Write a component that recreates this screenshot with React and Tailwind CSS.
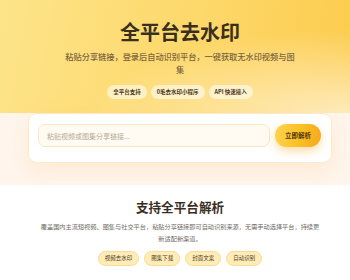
// App.jsx
import React from "react";

const topTags = ["全平台支持", "0毛去水印小程序", "API 快速接入"];
const featureTags = ["视频去水印", "图集下载", "封面文案", "自动识别"];

export default function App() {
  return (
    <div className="w-full min-h-[280px] bg-white font-['Noto_Sans_CJK_SC','Noto_Sans',sans-serif] overflow-hidden">
      {/* Hero */}
      <div className="bg-[radial-gradient(ellipse_at_100%_100%,rgba(255,243,215,0.95)_0%,rgba(255,243,215,0)_55%),linear-gradient(100deg,#fde48a_0%,#fdd86a_55%,#fccb4c_100%)] pt-[18px] pb-[31px] pl-[10px]">
        <h1 className="text-center text-[20px] leading-[28px] font-bold text-[#3a2f1f]">全平台去水印</h1>
        <p className="mx-auto mt-[4px] w-[232px] text-center text-[8.2px] leading-[12.5px] font-medium text-[#7a6440]">
          粘贴分享链接，登录后自动识别平台，一键获取无水印视频与图集
        </p>
        <div className="mt-[10px] flex justify-center gap-[4px]">
          {topTags.map((t) => (
            <span
              key={t}
              className="flex h-[14px] items-center rounded-full bg-white/55 px-[6px] text-[5.5px] font-bold text-[#4a3a20] whitespace-nowrap"
            >
              {t}
            </span>
          ))}
        </div>
      </div>

      {/* Search card */}
      <div className="bg-[#fff5ec] pl-[28px] pr-[18px] pb-[22px]">
        <div className="-mt-[17px] flex gap-[5px] rounded-[9px] border border-[#fdebc8] bg-white pl-[9px] pr-[10px] pt-[10px] pb-[15px] shadow-[0_8px_20px_rgba(240,180,90,0.16)]">
          <input
            className="h-[23px] flex-1 min-w-0 rounded-[7px] border border-[#fce8c0] bg-[#fffaf2] px-[8px] text-[7px] text-[#3a2f1f] outline-none placeholder:text-[#b8ab98]"
            placeholder="粘贴视频或图集分享链接..."
          />
          <button className="h-[23px] w-[46px] shrink-0 rounded-full bg-[linear-gradient(100deg,#fcd451_0%,#fbbf24_55%,#f8a71d_100%)] text-[6.5px] font-bold text-[#4f3508] shadow-[0_4px_10px_rgba(245,158,11,0.35)]">
            立即解析
          </button>
        </div>
      </div>

      {/* Platforms */}
      <div className="bg-white pt-[13px] pl-[10px]">
        <h2 className="text-center text-[12.6px] leading-[18px] font-bold text-[#3a2f1f]">支持全平台解析</h2>
        <p className="mx-auto mt-[5px] w-[282px] text-center text-[6.2px] leading-[12px] text-[#6e6a64]">
          覆盖国内主流短视频、图集与社交平台，粘贴分享链接即可自动识别来源，无需手动选择平台，持续更新适配新渠道。
        </p>
        <div className="mt-[6px] flex justify-center gap-[5px]">
          {featureTags.map((t) => (
            <span
              key={t}
              className="flex h-[15px] items-center rounded-full border border-[#fcdb8c] bg-[#feedb8] px-[6px] text-[5.5px] text-[#4f3b1c] whitespace-nowrap"
            >
              {t}
            </span>
          ))}
        </div>
      </div>
    </div>
  );
}
